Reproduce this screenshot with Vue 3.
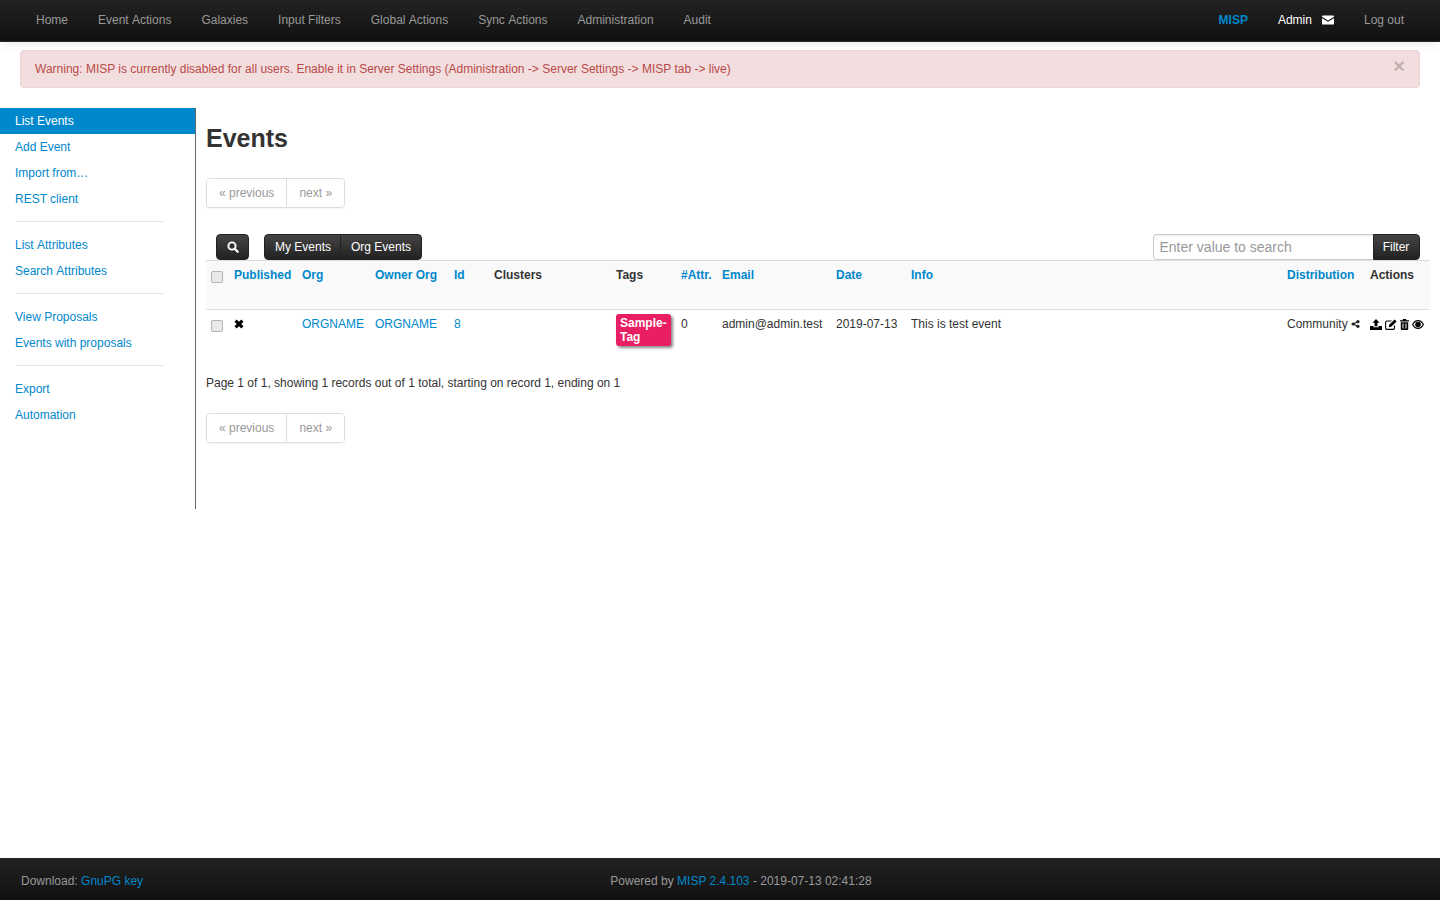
<script setup>
const navLeft = ['Home', 'Event Actions', 'Galaxies', 'Input Filters', 'Global Actions', 'Sync Actions', 'Administration', 'Audit']
const menu = [
  ['List Events', 'Add Event', 'Import from…', 'REST client'],
  ['List Attributes', 'Search Attributes'],
  ['View Proposals', 'Events with proposals'],
  ['Export', 'Automation'],
]
const headers = [
  ['Published', true], ['Org', true], ['Owner Org', true], ['Id', true], ['Clusters', false], ['Tags', false],
  ['#Attr.', true], ['Email', true], ['Date', true], ['Info', true], ['Distribution', true], ['Actions', false],
]
</script>

<template>
  <div class="page">
    <header class="navbar">
      <nav class="nav-left">
        <a v-for="n in navLeft" :key="n" class="nav-link" :class="{ spaced: n.includes(' A') }">{{ n }}</a>
      </nav>
      <div class="nav-right">
        <a class="nav-brand">MISP</a>
        <a class="nav-admin">
          <span>Admin</span>
          <svg class="env" viewBox="0 0 13 10" width="12" height="10"><path fill="#fff" d="M1 0h11a1 1 0 0 1 1 1v.6L6.500 5.600 0 1.600V1a1 1 0 0 1 1-1zM0 3l6.500 4L13 3v6a1 1 0 0 1-1 1H1a1 1 0 0 1-1-1z"/></svg>
        </a>
        <a class="nav-link">Log out</a>
      </div>
    </header>

    <div class="alert">
      <span>Warning: MISP is currently disabled for all users. Enable it in Server Settings (Administration -&gt; Server Settings -&gt; MISP tab -&gt; live)</span>
      <span class="close">×</span>
    </div>

    <div class="body-row">
      <aside class="side">
        <template v-for="(group, gi) in menu" :key="gi">
          <div v-if="gi > 0" class="divider"></div>
          <a v-for="m in group" :key="m" class="side-item" :class="{ active: m === 'List Events', spaced: m.includes(' A') }">{{ m }}</a>
        </template>
      </aside>

      <main class="main">
        <h2 class="title">Events</h2>
        <div class="pager">
          <span class="pg">« previous</span>
          <span class="pg">next »</span>
        </div>

        <div class="toolbar">
          <div class="tool-left">
            <button class="btn search-btn" aria-label="Search">
              <svg viewBox="0 0 12 12" width="12" height="12"><circle cx="5" cy="5" r="3.600" fill="none" stroke="#fff" stroke-width="1.900"/><path d="M7.700 7.700l3 3" stroke="#fff" stroke-width="2.200" stroke-linecap="round"/></svg>
            </button>
            <div class="btn-group">
              <button class="btn">My Events</button>
              <button class="btn">Org Events</button>
            </div>
          </div>
          <div class="tool-right">
            <input class="search-input" placeholder="Enter value to search" />
            <button class="btn filter-btn">Filter</button>
          </div>
        </div>

        <table class="grid">
          <colgroup>
            <col class="c0" /><col class="c1" /><col class="c2" /><col class="c3" /><col class="c4" /><col class="c5" />
            <col class="c6" /><col class="c7" /><col class="c8" /><col class="c9" /><col class="c10" /><col class="c11" /><col class="c12" />
          </colgroup>
          <thead>
            <tr>
              <th><input type="checkbox" class="cb" /></th>
              <th v-for="h in headers" :key="h[0]" :class="{ sortable: h[1] }">{{ h[0] }}</th>
            </tr>
          </thead>
          <tbody>
            <tr>
              <td><input type="checkbox" class="cb" /></td>
              <td>
                <svg class="ic cross" viewBox="0 0 10 10" width="10" height="10"><path d="M1.600 1.600l6.800 6.800M8.400 1.600l-6.800 6.800" stroke="#000" stroke-width="3.200"/></svg>
              </td>
              <td class="lnk">ORGNAME</td>
              <td class="lnk">ORGNAME</td>
              <td class="lnk">8</td>
              <td></td>
              <td><span class="tag">Sample-Tag</span></td>
              <td>0</td>
              <td>admin@admin.test</td>
              <td>2019-07-13</td>
              <td>This is test event</td>
              <td class="nowrap">Community
                <svg class="ic" viewBox="0 0 10 10" width="9" height="10"><path d="M7.500 2.500L2.500 5l5 2.500" stroke="#222" stroke-width="1.300" fill="none"/><circle cx="7.700" cy="2.400" r="1.800" fill="#222"/><circle cx="2.300" cy="5" r="1.800" fill="#222"/><circle cx="7.700" cy="7.600" r="1.800" fill="#222"/></svg>
              </td>
              <td>
                <div class="actions">
                  <svg class="ic" viewBox="0 0 12 11" width="12" height="11"><path fill="#000" d="M6 0l3.500 3.800H7.400v3.400H4.600V3.800H2.500zM0 7h3.500v1.300h5V7H12v4H0z"/></svg>
                  <svg class="ic" viewBox="0 0 12 11" width="12" height="11"><path fill="none" stroke="#000" stroke-width="1.100" d="M9.500 6.500V9a1.400 1.400 0 0 1-1.400 1.400H2A1.400 1.400 0 0 1 .6 9V3.400A1.400 1.400 0 0 1 2 2h4.500"/><path fill="#000" d="M9.600.4l2 2-5.400 5.400-2.500.5.500-2.500z"/></svg>
                  <svg class="ic" viewBox="0 0 9 11" width="9" height="11"><path fill="#000" d="M3 0h3l.6 1.200H9v1.300H0V1.200h2.400zM.8 3.200h7.400V10a1 1 0 0 1-1 1H1.800a1 1 0 0 1-1-1zM2.500 4.500v5h1v-5zm3 0v5h1v-5z"/></svg>
                  <svg class="ic" viewBox="0 0 12 9" width="12" height="9"><path fill="#000" fill-rule="evenodd" d="M6 0c2.700 0 4.900 1.800 6 4.500C10.900 7.200 8.700 9 6 9S1.100 7.200 0 4.500C1.100 1.800 3.300 0 6 0zM1.300 4.500C2.300 6.500 4 7.800 6 7.800s3.700-1.300 4.700-3.300C9.700 2.500 8 1.200 6 1.200S2.300 2.500 1.300 4.500z"/><circle cx="6" cy="4.500" r="2.800" fill="#000"/></svg>
                </div>
              </td>
            </tr>
          </tbody>
        </table>

        <p class="count">Page 1 of 1, showing 1 records out of 1 total, starting on record 1, ending on 1</p>
        <div class="pager">
          <span class="pg">« previous</span>
          <span class="pg">next »</span>
        </div>
      </main>
    </div>

    <footer class="footer">
      <div class="foot-left">Download: <a class="foot-link">GnuPG key</a></div>
      <div class="foot-center">Powered by <a class="foot-link">MISP 2.4.103</a> - 2019-07-13 02:41:28</div>
    </footer>
  </div>
</template>

<style>
html, body { margin: 0; padding: 0; background: #fff; }
</style>

<style scoped>
* { box-sizing: border-box; }
.page {
  position: relative;
  height: 900px;
  overflow: hidden;
  font-family: "Liberation Sans", Arial, sans-serif;
  font-size: 12px;
  line-height: 20px;
  color: #333;
  display: flex;
  flex-direction: column;
}
.spaced { word-spacing: 0.660px; }
.navbar {
  height: 42px;
  flex: none;
  display: flex;
  justify-content: space-between;
  padding: 0 21px;
  background: linear-gradient(to bottom, #222, #111);
  border-bottom: 1px solid #252525;
  box-shadow: 0 1px 10px rgba(0, 0, 0, 0.1);
}
.nav-left, .nav-right { display: flex; align-items: flex-start; }
.nav-link { padding: 10px 15px 11px; color: #999; }
.nav-brand { padding: 10px 15px 11px; color: #0088cc; font-weight: bold; }
.nav-admin { padding: 10px 15px 11px; color: #fff; display: flex; align-items: center; gap: 10px; height: 41px; }
.env { margin-top: -1px; }
.alert {
  position: relative;
  margin: 8px 20px 20px;
  height: 38px;
  padding: 8px 35px 8px 14px;
  background: #f2dede;
  border: 1px solid #eed3d7;
  border-radius: 4px;
  color: #b94a48;
  flex: none;
}
.close {
  position: absolute;
  top: 5px;
  right: 14px;
  font-size: 20px;
  font-weight: bold;
  line-height: 20px;
  color: #000;
  opacity: 0.2;
}
.body-row { display: flex; align-items: flex-start; flex: 1; min-height: 0; }
.side {
  width: 196px;
  height: 401px;
  flex: none;
  border-right: 1px solid #666;
}
.side-item {
  display: block;
  height: 26px;
  padding: 3px 15px;
  color: #0088cc;
}
.side-item.active { background: #0088cc; color: #fff; }
.divider { height: 1px; margin: 9px 31px 10px 16px; background: #e5e5e5; }
.main { flex: 1; padding-left: 10px; padding-right: 10px; min-width: 0; }
.title {
  margin: 10px 0 0;
  height: 60px;
  font-size: 25px;
  line-height: 40px;
  font-weight: bold;
  color: #333;
}
.pager {
  display: inline-flex;
  height: 30px;
  vertical-align: top;
  border-radius: 4px;
  box-shadow: 0 1px 2px rgba(0, 0, 0, 0.05);
  border: 1px solid #ddd;
}
.pg {
  padding: 4px 12px;
  color: #999;
  background: #fff;
}
.pg + .pg { border-left: 1px solid #ddd; }
.pg:first-child { border-radius: 3px 0 0 3px; }
.pg:last-child { border-radius: 0 3px 3px 0; }
.toolbar {
  display: flex;
  justify-content: space-between;
  height: 26px;
  margin-top: 26px;
  padding: 0 10px;
}
.tool-left, .tool-right { display: flex; }
.tool-left { gap: 15px; }
.btn {
  height: 26px;
  padding: 0 10px;
  font: inherit;
  color: #fff;
  background: linear-gradient(to bottom, #444, #222);
  border: 1px solid #222;
  border-radius: 4px;
  display: flex;
  align-items: center;
  justify-content: center;
}
.search-btn { width: 33px; padding: 0 0 0 1px; }
.btn-group { display: flex; }
.btn-group .btn:first-child { border-radius: 4px 0 0 4px; width: 77px; padding: 0 0 0 10px; justify-content: flex-start; }
.btn-group .btn:last-child { border-radius: 0 4px 4px 0; margin-left: -1px; }
.search-input {
  width: 220px;
  height: 26px;
  padding: 4px 5.500px;
  font-family: inherit;
  font-size: 14px;
  color: #555;
  border: 1px solid #ccc;
  border-right: 0;
  border-radius: 4px 0 0 4px;
  background: #fff;
  box-shadow: inset 0 1px 1px rgba(0, 0, 0, 0.075);
  outline: none;
}
.search-input::placeholder { color: #999; opacity: 1; }
.filter-btn { width: 47px; padding: 0 1px 0 0; border-radius: 0 4px 4px 0; }
.grid {
  width: 1224px;
  table-layout: fixed;
  border-collapse: collapse;
  border-spacing: 0;
}
.c0 { width: 23px; } .c1 { width: 68px; } .c2 { width: 73px; } .c3 { width: 79px; } .c4 { width: 40px; }
.c5 { width: 122px; } .c6 { width: 65px; } .c7 { width: 41px; } .c8 { width: 114px; } .c9 { width: 75px; }
.c10 { width: 376px; } .c11 { width: 83px; } .c12 { width: 65px; }
.grid th, .grid td {
  padding: 4px 5px;
  text-align: left;
  vertical-align: top;
  line-height: 20px;
  word-break: normal;
}
.grid th { height: 49px; background: #f9f9f9; font-weight: bold; border-top: 1px solid #ddd; white-space: nowrap; }
.grid td { height: 57px; border-top: 1px solid #ddd; }
.grid th.sortable { color: #0088cc; }
.lnk { color: #0088cc; }
.nowrap { white-space: nowrap; }
.cb {
  appearance: none;
  display: block;
  width: 12px;
  height: 12px;
  margin: 6px 0 0;
  background: #e9e9e9;
  border: 1px solid #b5b5b5;
  border-radius: 2px;
}
.ic { display: inline-block; vertical-align: -1px; }
.actions { display: flex; align-items: center; gap: 3px; height: 20px; }
.tag {
  display: block;
  width: 55px;
  padding: 2px 4px;
  background: #e91e63;
  color: #fff;
  font-size: 12px;
  font-weight: bold;
  line-height: 14px;
  border-radius: 3px;
  box-shadow: 2px 2px 3px #888;
  overflow-wrap: normal;
}
.count { margin: 6px 0 20px; height: 20px; }
.footer {
  position: absolute;
  left: 0;
  right: 0;
  bottom: 0;
  height: 42px;
  background: linear-gradient(to bottom, #222, #111);
  border-top: 1px solid #252525;
  color: #999;
  padding: 12px 21px 0;
  display: grid;
  grid-template-columns: 1fr auto 1fr;
}
.foot-left { grid-column: 1; }
.foot-center { grid-column: 2; margin-left: 42px; }
.foot-link { color: #0088cc; }
</style>
